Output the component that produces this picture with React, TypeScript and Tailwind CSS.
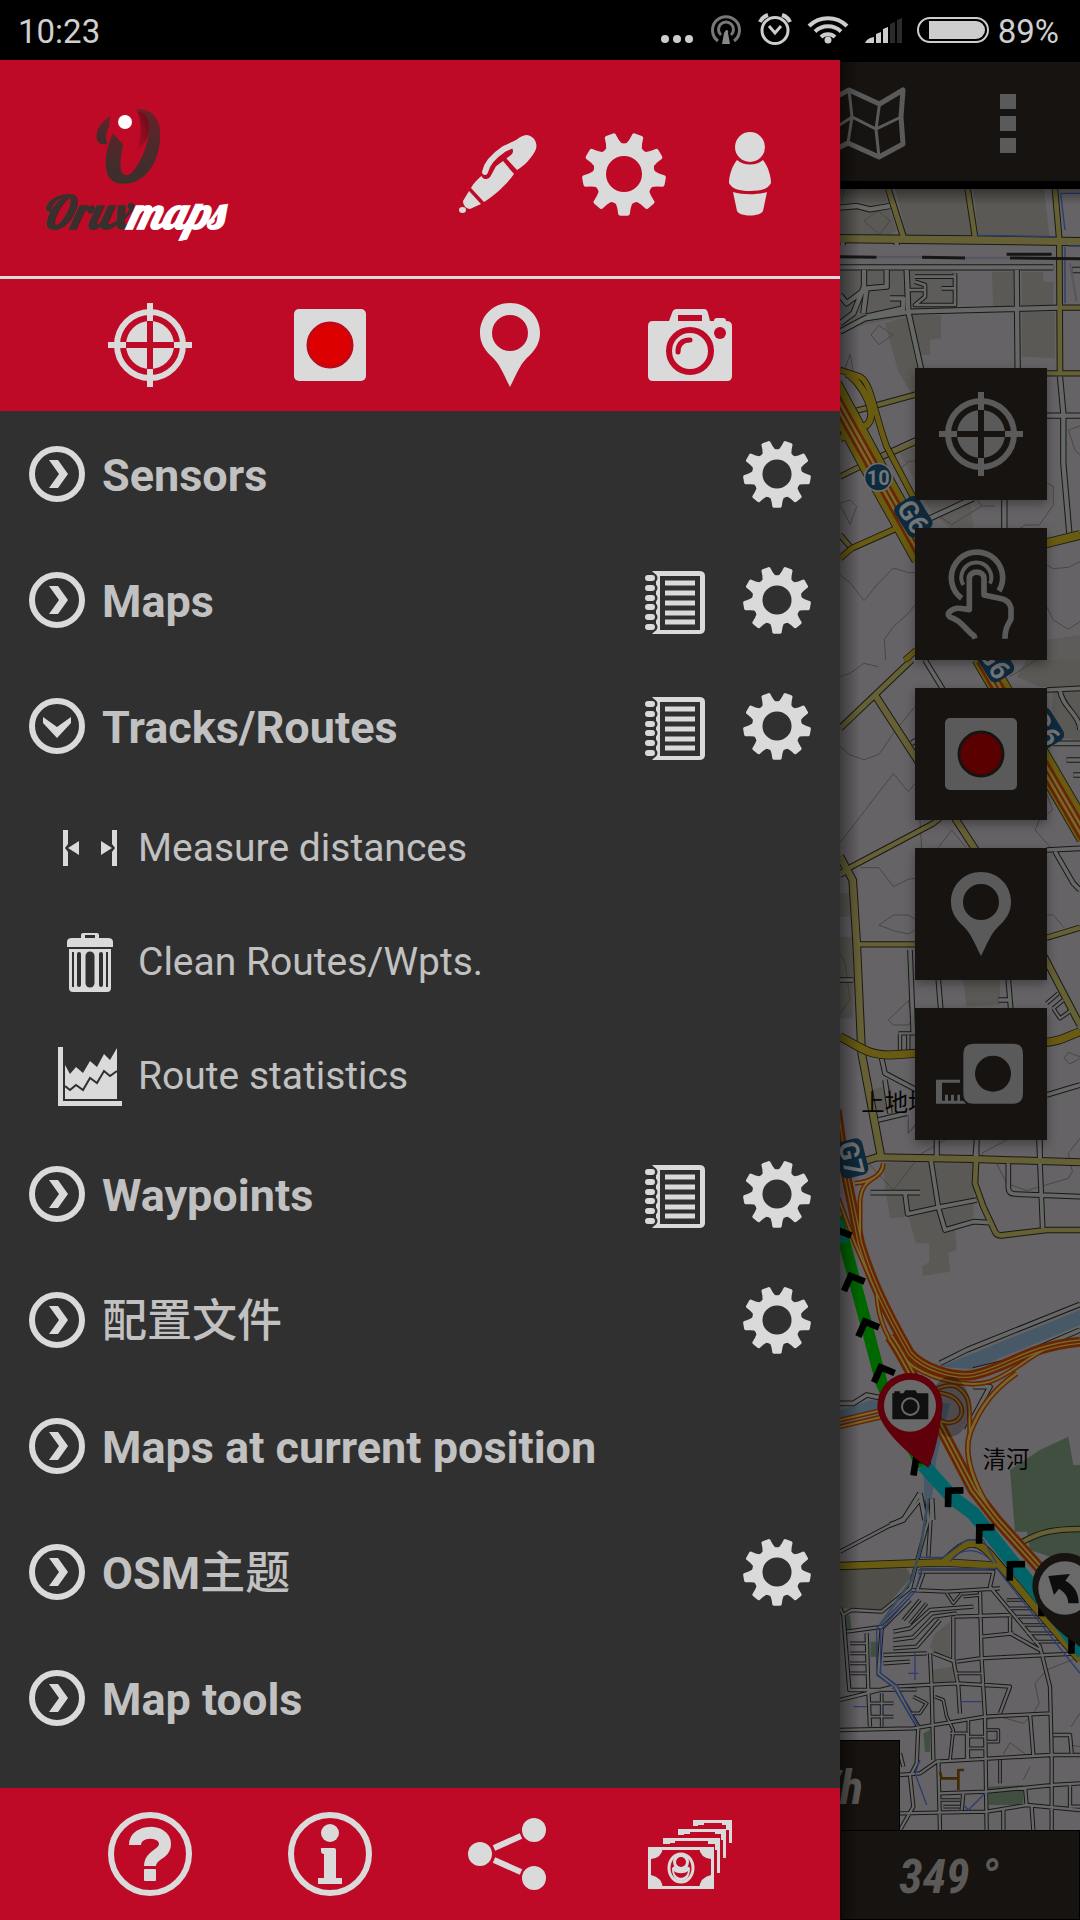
import React, { useState } from "react";

const LIGHT = "#dadada";
const RED = "#be0a26";

function gearPath(c: number, outer: number, root: number, hole: number) {
  const pt = (r: number, deg: number) => {
    const a = (deg * Math.PI) / 180;
    return `${(c + r * Math.cos(a)).toFixed(2)} ${(c + r * Math.sin(a)).toFixed(2)}`;
  };
  let d = "";
  for (let i = 0; i < 9; i++) {
    const a = 90 + i * 40;
    d += `${i === 0 ? "M" : "L"}${pt(root, a - 15)}`;
    d += `L${pt(root + 4, a - 11)}L${pt(outer - 1, a - 8)}Q${pt(outer, a - 7)} ${pt(outer, a - 5)}`;
    d += `L${pt(outer, a + 5)}Q${pt(outer, a + 7)} ${pt(outer - 1, a + 8)}`;
    d += `L${pt(root + 4, a + 11)}L${pt(root, a + 15)}Q${pt(root - 1, a + 20)} ${pt(root, a + 25)}`;
  }
  return `${d}ZM${c + hole} ${c}A${hole} ${hole} 0 1 0 ${c - hole} ${c}A${hole} ${hole} 0 1 0 ${c + hole} ${c}Z`;
}
const GEAR = gearPath(42, 42, 31, 18);

const GearIcon = ({ className }: { className: string }) => (
  <svg viewBox="0 0 84 84" className={className} fill={LIGHT} fillRule="evenodd" aria-hidden="true">
    <path d={GEAR} />
  </svg>
);

const PenIcon = () => (
  <svg viewBox="0 0 78 78" className="size-[78px]" fill={LIGHT} aria-hidden="true">
    <path d="M44 24C46 12 60 1 67 0C74 0 79 7 77 14C74 22 64 32 58 35L47 23Z" />
    <path d="M44 26L55 39C48 49 36 60 25 67L12 53C16 45 30 34 42 25Z" />
    <path d="M10 56L22 69L11 74C7 74 4 70 4 66Z" />
    <ellipse cx="3.500" cy="75" rx="3.500" ry="3" />
    <path d="M27 39L33 28L49 16" fill="none" stroke={RED} strokeWidth="10" strokeLinecap="round" />
    <path d="M26 37C28 27 36 20 45 14L58 8" fill="none" stroke={LIGHT} strokeWidth="6" strokeLinecap="round" strokeLinejoin="round" />
  </svg>
);

const PersonIcon = () => (
  <svg viewBox="0 0 42 84" className="h-[84px] w-[42px]" fill={LIGHT} aria-hidden="true">
    <path d="M8 28C15 34 27 34 34 28C39 34 42 44 42 51C39 57 32 59 21 59C10 59 3 57 0 51C0 44 3 34 8 28Z" />
    <circle cx="21" cy="15" r="15" />
    <path d="M4 60C14 63 28 63 38 60L34 79C31 85 11 85 8 79Z" />
  </svg>
);

const CrosshairIcon = ({ color, gap }: { color: string; gap: string }) => (
  <svg viewBox="0 0 84 84" className="size-[84px]" aria-hidden="true">
    <circle cx="42" cy="42" r="33" fill="none" stroke={color} strokeWidth="6" />
    <circle cx="42" cy="42" r="24" fill={color} />
    <path d="M42 12V72M12 42H72" stroke={gap} strokeWidth="6" />
    <path d="M42 0V18M42 66V84M0 42H18M66 42H84" stroke={color} strokeWidth="6" />
  </svg>
);

const RecordIcon = ({ color, rim, dot }: { color: string; rim: string; dot: string }) => (
  <svg viewBox="0 0 72 72" className="size-[72px]" aria-hidden="true">
    <rect width="72" height="72" rx="5" fill={color} />
    <circle cx="36" cy="36" r="22" fill={dot} stroke={rim} strokeWidth="3" />
  </svg>
);

const PinIcon = ({ color }: { color: string }) => (
  <svg viewBox="0 0 60 84" className="h-[84px] w-[60px]" fill={color} fillRule="evenodd" aria-hidden="true">
    <path d="M30 0C47 0 60 13 60 30C60 39 56 46 50 52C40 61 38 68 30 84C22 68 20 61 10 52C4 46 0 39 0 30C0 13 13 0 30 0ZM30 12A18 18 0 1 0 30 48A18 18 0 1 0 30 12Z" />
  </svg>
);

const CameraIcon = () => (
  <svg viewBox="0 0 84 72" className="h-[72px] w-[84px]" aria-hidden="true">
    <path fillRule="evenodd" fill={LIGHT} d="M5 12H21L24 4Q25 0 29 0H56Q59 0 60 4L62 12H66Q66 9 69 9H75Q78 9 78 12Q84 12 84 17V67Q84 72 79 72H5Q0 72 0 67V17Q0 12 5 12ZM30 6V12H54V6Z" />
    <circle cx="72" cy="24" r="6" fill={RED} />
    <circle cx="42" cy="42" r="21" fill="none" stroke={RED} strokeWidth="6" />
    <path d="M30 43C30 35 34 31 42 31" fill="none" stroke={RED} strokeWidth="5" strokeLinecap="round" />
  </svg>
);

const HelpIcon = () => (
  <svg viewBox="0 0 84 84" className="size-[84px]" fill="none" stroke={LIGHT} aria-hidden="true">
    <circle cx="42" cy="42" r="39" strokeWidth="6" />
    <path d="M27 33C27 17 57 17 57 32C57 43 42 42 42 54" strokeWidth="12" />
    <rect x="36" y="57" width="12" height="12" rx="1" fill={LIGHT} stroke="none" />
  </svg>
);

const InfoIcon = () => (
  <svg viewBox="0 0 84 84" className="size-[84px]" fill={LIGHT} aria-hidden="true">
    <circle cx="42" cy="42" r="39" fill="none" stroke={LIGHT} strokeWidth="6" />
    <circle cx="42" cy="21" r="9" />
    <path d="M33 36H46Q48 36 48 38V66H54V72H30V66H36V42Q33 42 33 39Z" />
  </svg>
);

const ShareIcon = () => (
  <svg viewBox="0 0 84 72" className="h-[72px] w-[84px]" fill={LIGHT} aria-hidden="true">
    <circle cx="12" cy="36" r="12" />
    <circle cx="66" cy="12" r="12" />
    <circle cx="66" cy="60" r="12" />
    <path d="M26 30L53 18M26 42L53 54" stroke={LIGHT} strokeWidth="6" />
  </svg>
);

const MoneyIcon = () => (
  <svg viewBox="0 0 84 69" className="h-[69px] w-[84px]" aria-hidden="true">
    <g fill="none" stroke={LIGHT} strokeWidth="3">
      <path d="M46.500 6V1.500H82.500V23" />
      <path d="M31.500 15V10.500H76.500V38" />
      <path d="M16.500 24V19.500H70.500V53" />
      <rect x="1.500" y="28.500" width="63" height="39" rx="1" />
      <ellipse cx="33" cy="48" rx="12" ry="14" />
    </g>
    <g fill={LIGHT}>
      <path d="M46 0H56V5H50V6H46ZM74 0H84V10H78V5H74ZM31 9H42V14H36V15H31ZM67 9H78V20H73V14H67ZM15 18H27V23H22V24H15ZM60 18H72V30H67V24H60Z" />
      <path d="M0 27H15Q14 38 3 39H0ZM66 27H51Q52 38 63 39H66ZM0 69H15Q14 57 3 55H0ZM66 69H51Q52 57 63 55H66Z" />
      <path d="M24 48C27 44 39 44 42 48C42 57 38 61 33 61C28 61 24 57 24 48Z" />
    </g>
    <circle cx="33" cy="42" r="6.500" fill={RED} stroke={LIGHT} strokeWidth="3" />
    <path d="M26 51C29 54 37 54 40 51C39 60 27 60 26 51Z" fill={RED} />
  </svg>
);

const NotebookIcon = () => (
  <svg viewBox="0 0 60 63" className="h-[63px] w-[60px]" aria-hidden="true">
    <path fill={LIGHT} fillRule="evenodd" d="M7 0H54Q60 0 60 5V58Q60 63 54 63H7L11 59V4ZM15 5V59H55V5Z" />
    <path stroke={LIGHT} strokeWidth="5" d="M20 12H50M20 22H50M20 32H50M20 42H50M20 51H50" />
    <path stroke="#303030" strokeWidth="9" strokeLinecap="round" d="M4 7H8M4 17H8M4 27H8M4 36H8M4 46H8M4 56H8" />
    <path stroke={LIGHT} strokeWidth="6" strokeLinecap="round" d="M3 7H7M3 17H7M3 27H7M3 36H7M3 46H7M3 56H7" />
  </svg>
);

const ArrowIcon = ({ open }: { open: boolean }) => (
  <svg viewBox="0 0 56 56" className="size-14 shrink-0" fill={LIGHT} aria-hidden="true">
    <circle cx="28" cy="28" r="25" fill="none" stroke={LIGHT} strokeWidth="6" />
    {open ? <path d="M14 19L28 29L42 19V25L28 40L14 25Z" /> : <path d="M20 14H29L39 28L29 42H20L30 28Z" />}
  </svg>
);

const MeasureIcon = () => (
  <svg viewBox="0 0 54 36" className="h-9 w-[54px]" fill={LIGHT} aria-hidden="true">
    <path d="M0 0H5V14L2 18L5 22V36H0ZM54 0H49V14L52 18L49 22V36H54ZM5 18L16 11V25ZM49 18L38 11V25Z" />
  </svg>
);

const TrashIcon = () => (
  <svg viewBox="0 0 46 59" className="h-[59px] w-[46px]" aria-hidden="true">
    <path fill={LIGHT} fillRule="evenodd" d="M0 14V9Q0 5 5 5H14V2Q14 0 16 0H30Q32 0 32 2V5H41Q46 5 46 9V14ZM18 2V5H28V2Z" />
    <path fill={LIGHT} d="M2 16H44V55Q44 59 40 59H6Q2 59 2 55Z" />
    <path stroke="#303030" strokeLinecap="round" strokeWidth="4" d="M12 21V52M34 21V52" />
    <path stroke="#303030" strokeLinecap="round" strokeWidth="9" d="M23 23V50" />
    <path stroke="#303030" strokeWidth="2" d="M6 19V54M40 19V54" />
  </svg>
);

const ChartIcon = () => (
  <svg viewBox="0 0 64 59" className="h-[59px] w-16" fill={LIGHT} aria-hidden="true">
    <path d="M0 0H5V54H64V59H0Z" />
    <path d="M7 18L12 27L18 20L25 26L32 14L39 20L46 7L52 13L59 1V52H7Z" />
    <path d="M7 39L12 43L18 38L25 43L32 31L39 36L46 24L52 29L59 24" fill="none" stroke="#303030" strokeWidth="2" />
  </svg>
);

const Logo = () => (
  <svg viewBox="102 324 600 400" className="h-[133px] w-[200px]" role="img" aria-label="Oruxmaps">
    <defs>
      <linearGradient id="ink" x1="0" y1="0" x2="0" y2="1">
        <stop offset="0" stopColor="#66222a" />
        <stop offset="0.6" stopColor="#4a2a2a" />
        <stop offset="1" stopColor="#38302c" />
      </linearGradient>
      <linearGradient id="fold" x1="1" y1="0" x2="0" y2="1">
        <stop offset="0" stopColor="#5a0d18" />
        <stop offset="1" stopColor={RED} />
      </linearGradient>
    </defs>
    <path fill="url(#fold)" d="M410 332C428 365 425 415 406 458C435 435 452 400 452 370C445 345 430 335 410 332Z" />
    <path fill="url(#ink)" d="M400 328C450 322 481 350 481 405C481 480 440 552 370 552C330 552 315 525 317 480C319 450 328 425 338 400L370 434C362 460 360 490 362 510C366 530 385 530 396 518C430 480 447 420 447 385C447 350 430 332 400 328Z" />
    <path fill="url(#ink)" d="M333 348C300 365 288 390 290 415C293 432 305 435 321 432C316 415 318 395 328 378C327 365 329 358 333 348Z" />
    <circle cx="375" cy="366" r="21" fill="#fff" />
    <text x="120" y="688" fontSize="138" fontWeight="700" fontStyle="italic" fontFamily="Lobster, 'Liberation Serif', serif" fill="#38302c">
      Orux<tspan fill="#fff">maps</tspan>
    </text>
  </svg>
);

function StatusBar() {
  return (
    <header className="flex h-[60px] shrink-0 items-center bg-black pt-0.5 pr-[21px] pl-[18px] text-[33px] leading-none text-[#cfcfcf]">
      <time className="flex-1">10:23</time>
      <svg viewBox="660 1 332 60" className="h-[60px] w-[332px]" fill="#cdcdcd" aria-hidden="true">
        <circle cx="665" cy="39" r="4" />
        <circle cx="677" cy="39" r="4" />
        <circle cx="689" cy="39" r="4" />
        <g fill="none" stroke="#777" strokeWidth="3">
          <path d="M718 41A13.500 13.500 0 1 1 734 41" />
          <path d="M721 35A7.500 7.500 0 1 1 731 35" />
        </g>
        <path d="M726 30A2 2 0 0 1 728 33L730 44H722L724 33Z" fill="#888" />
        <g fill="none" stroke="#cdcdcd" strokeWidth="3">
          <circle cx="775" cy="30.500" r="13" />
          <path d="M769 26L775 33L781 26" />
          <path d="M760 22Q762 17 768 15M790 22Q788 17 782 15" strokeWidth="4" />
        </g>
        <g fill="none" stroke="#cdcdcd" strokeWidth="4">
          <path d="M809 26A27 27 0 0 1 847 26" />
          <path d="M815 31.500A19 19 0 0 1 841 31.500" />
          <path d="M821 37A10 10 0 0 1 835 37" />
        </g>
        <circle cx="828" cy="40" r="3.500" />
        <path d="M865 43Q867 38 874 37V43ZM876 43V34L881 32V43ZM883 43V29L888 27V43Z" />
        <path d="M890 43V24L895 22V43ZM897 43V20L902 18V43Z" fill="#2b2b2b" />
        <rect x="918" y="18" width="70" height="24" rx="12" fill="none" stroke="#cdcdcd" strokeWidth="2" />
        <path d="M929 21H976A9 9 0 0 1 976 39H929Z" />
      </svg>
      <span className="ml-1.5">89%</span>
    </header>
  );
}

type RowIcon = "book" | "gear";
type Group = {
  title: string;
  cjk?: string;
  icons: RowIcon[];
  items?: { label: string; icon: React.ReactNode }[];
};
const groups: Group[] = [
  { title: "Sensors", icons: ["gear"] },
  { title: "Maps", icons: ["book", "gear"] },
  {
    title: "Tracks/Routes",
    icons: ["book", "gear"],
    items: [
      { label: "Measure distances", icon: <MeasureIcon /> },
      { label: "Clean Routes/Wpts.", icon: <TrashIcon /> },
      { label: "Route statistics", icon: <ChartIcon /> },
    ],
  },
  { title: "Waypoints", icons: ["book", "gear"] },
  { title: "", cjk: "配置文件", icons: ["gear"] },
  { title: "Maps at current position", icons: [] },
  { title: "OSM", cjk: "主题", icons: ["gear"] },
  { title: "Map tools", icons: [] },
];

function Drawer() {
  const [open, setOpen] = useState("Tracks/Routes");
  const tool = "flex items-center justify-center";
  return (
    <aside className="z-10 flex w-7/9 shrink-0 flex-col bg-[#303030] text-[#c1c1c1]">
      <div className="flex h-[216px] items-center bg-[#be0a26] pt-3 pr-[27px] pl-[34px]">
        <div className="flex-1">
          <Logo />
        </div>
        <button aria-label="Edit" className="flex w-[126px] justify-center"><PenIcon /></button>
        <button aria-label="Settings" className="flex w-[126px] justify-center"><GearIcon className="size-[84px]" /></button>
        <button aria-label="Profile" className="flex w-[126px] justify-center"><PersonIcon /></button>
      </div>
      <nav className="grid h-[135px] grid-cols-4 border-t-3 border-[#dedada] bg-[#be0a26] px-15">
        <button aria-label="GPS" className={tool}><CrosshairIcon color={LIGHT} gap={RED} /></button>
        <button aria-label="Record track" className={tool}><RecordIcon color={LIGHT} rim="#be0a18" dot="#dc0000" /></button>
        <button aria-label="New waypoint" className={tool}><PinIcon color={LIGHT} /></button>
        <button aria-label="Photo waypoint" className={tool}><CameraIcon /></button>
      </nav>
      <ul className="flex-1">
        {groups.map((g) => {
          const name = g.title + (g.cjk ?? "");
          return (
            <li key={name}>
              <div className="flex h-[126px] items-center gap-[38px] px-[29px]">
                <button
                  aria-expanded={open === name}
                  onClick={() => setOpen(open === name ? "" : name)}
                  className="flex flex-1 items-center gap-[17px] text-left text-[45px] leading-[60px] font-bold whitespace-nowrap"
                >
                  <ArrowIcon open={open === name} />
                  <span className="pt-1">
                    {g.title}
                    {g.cjk && <span className="font-medium">{g.cjk}</span>}
                  </span>
                </button>
                {g.icons.map((i) => (
                  <button key={i} aria-label={`${name} ${i === "book" ? "list" : "settings"}`} className={i === "book" ? "shrink-0 pt-1" : "shrink-0"}>
                    {i === "book" ? <NotebookIcon /> : <GearIcon className="size-[68px]" />}
                  </button>
                ))}
              </div>
              {g.items && open === name && (
                <ul>
                  {g.items.map((s) => (
                    <li key={s.label}>
                      <button className="flex h-[114px] w-full items-center gap-4 pt-1 pl-[58px] text-[39px] leading-[52px]">
                        <span className="flex w-16 justify-center">{s.icon}</span>
                        <span>{s.label}</span>
                      </button>
                    </li>
                  ))}
                </ul>
              )}
            </li>
          );
        })}
      </ul>
      <nav className="grid h-[132px] grid-cols-4 bg-[#be0a26] px-15">
        <button aria-label="Help" className={tool}><HelpIcon /></button>
        <button aria-label="About" className={tool}><InfoIcon /></button>
        <button aria-label="Share" className={tool}><ShareIcon /></button>
        <button aria-label="Donate" className={tool}><MoneyIcon /></button>
      </nav>
    </aside>
  );
}

/* Map tiles: each tile row has its own vertical offset inside the 720-unit wide sheet. */
const N = -27;
const M = 1413;
const S = 2793;
const T = 3933;

type Line = [number, string, number];

const areas: [number, string, string][] = [
  [N, "M165 27H370L395 165H200ZM400 27H612L628 168L415 165ZM0 27H130L170 150L150 165H0Z", "#5b5955"],
  [N, "M455 275H520V380H460ZM545 275H610V305H640V375H545ZM545 395H645V535L545 530ZM135 430L215 405H303V475L270 480V525H245L260 620L215 640L175 575Z", "#5b5955"],
  [N, "M0 270H340V380L0 450ZM180 820L230 800V960H390L400 1045H330L270 990ZM620 1380L720 1365V1440H620Z", "#5e5c5a"],
  [M, "M530 50L600 80H640L635 150L665 235L720 240V0H560ZM0 700H30V770H0ZM0 830H40V1075H0ZM370 960H480V1035L380 1040ZM90 1290L150 1275L165 1345L110 1360Z", "#5b5955"],
  [S, "M130 130L280 115L405 120L400 290L345 325L350 390L325 400L330 455L250 467L245 440L268 425V370H228L205 290L150 295L135 200Z", "#5b5955"],
  [S, "M300 740L400 747L720 615V570Z", "#475866"],
  [S, "M0 870L150 822V860L0 895ZM250 1040L300 850L330 850L290 1010L270 1190H255Z", "#475866"],
  [S, "M510 1050L600 990L685 950L700 1035H720V1235H525Z", "#414f41"],
  [T, "M520 0L528 85L560 92L570 150L720 200V0Z", "#414f41"],
  [T, "M0 205H200L215 230L130 330L0 325Z", "#504f49"],
  [T, "M445 860L550 855V915H447ZM92 425H115V470H92ZM250 700L270 690V755H255ZM10 350L30 345L35 395L15 390Z", "#414f41"],
  [T, "M285 400L330 365V470H290L270 440ZM275 510L340 500V550H285Z", "#5b5955"],
];

const contours: Line[] = [
  [N, "M72 123L115 92L150 123L118 163ZM93 465L117 436L158 465L117 494ZM10 580L30 522L42 590M0 970L30 960L50 980L30 1033L0 975M0 1185L30 1208L72 1262L115 1210L160 1164L205 1178H225M225 1275L205 1300L160 1340L133 1378L137 1440M180 870L205 844H225M300 1010L335 1034L425 978L400 940M425 978H465M540 1045L555 1035H598L640 975V920L620 908M720 738L685 750L705 810L720 825M620 1280L640 1320L685 1348L720 1325M620 1155L640 1166L685 1162L720 1145M12 27L5 70", 3],
  [M, "M0 50L30 40L72 10L115 20M0 260L30 285L72 299L117 283L160 220L225 140M0 548L160 341L205 395L225 370M60 623H117L160 680L205 658L225 655M117 795L160 765H205L225 778M117 795L160 812L205 822L225 810M145 1080L205 1022L216 1080L205 1095H160ZM240 480L245 565M295 563L335 510L378 563M620 400L638 450L598 480L585 510L632 563M620 765H640L672 803M510 50L590 0M205 1365V1420L225 1395M672 1195L685 1177L720 1190M672 1195L690 1212L720 1195M0 880L15 910L30 1020L0 1060", 3],
  [S, "M205 0V40L240 0M85 130L160 210L245 100L315 60M425 100L500 60M425 100L440 125M470 130L500 190L560 212L685 175L697 155L685 100L720 55", 3],
  [T, "M720 470L620 510L585 550L597 610L580 640M435 660L480 650L550 670L575 645M490 762L510 728L555 762M550 840L570 800M720 640L693 680M500 860L510 898L545 862M720 740L690 735", 3],
];

const minor: Line[] = [
  [N, "M0 83L50 78L90 88L150 78M0 262H640M0 455L75 415L210 395L660 383M200 270L205 395L245 575M530 270L533 575M72 270V320M140 270V320L80 325L20 370L0 345M72 320L40 400L0 430M150 355H190V385L80 410M660 590L670 700V850L688 1060M620 707H720M120 830L230 780M270 1015L400 955M493 960V1050M8 180V195M170 180V195M697 270H720M80 325L70 400", 13],
  [N, "M225 290H345V375H225L255 350V315L225 305M345 280V375M205 330H255M305 325H345", 8],
  [M, "M255 0L310 90M620 90L720 85M660 90C665 140 720 165 720 210M640 250H720M680 300H720M700 345H720M620 570L720 565M645 575L700 670L720 690M210 870L220 1120M295 960L302 1045M505 960L512 1045M475 1020H510M125 1195L135 1240L230 1290M115 1380L200 1360M135 1260L150 1360M620 1305L720 1275M290 1440V1500M410 1440L405 1500M600 1440V1500M0 960H40M215 250L230 240M0 645L20 635", 11],
  [M, "M175 1120H225M180 1120V1175M205 1125V1175M620 1030L655 1000M640 1045L670 1020M640 1045L660 1075L695 1050", 7],
  [S, "M92 218H240M195 220L203 282L295 262L410 240M272 115L295 262L315 330L400 305L450 308M505 130V205Q507 222 525 222L720 230M597 60L608 325M290 60V110M410 60V110M300 730L380 690L720 553M400 750L500 725L720 630M0 850L40 850L80 825L130 835M380 930L450 800L400 800M240 1120L190 1200L150 1215M240 1120L255 1200M275 1135L278 1200", 11],
  [T, "M240 0L200 50L0 155M260 0L265 60L240 150L210 265L125 335L35 330L10 345L28 570L230 568M275 0L265 170M10 345L0 325M20 395L130 380L210 300M125 385L115 520L165 560L235 680L230 790L215 820M0 600L160 560L350 550L430 555M0 690L220 685L435 650L630 640M80 400L85 570L90 680M180 825L240 820L290 785L630 765H720M215 270L320 275L480 265M235 215H460L450 260L600 440L630 560L635 760L635 990M250 220L230 275M340 350V480L355 560L360 640M345 350L510 345M420 275L425 480L435 650L440 990M350 485L420 475L720 460M280 460L345 485M160 395L210 385L270 330L400 320M160 420L220 412L280 350L350 340M160 445L230 440L300 360M130 465L260 460M130 490L210 485M425 410L520 400M510 350V400L600 450M295 780L300 990M300 880L440 875L640 855L720 850M180 940L440 935L560 915L720 930M570 640L580 765M435 555L510 560L480 640M490 930V990M575 920L580 990M640 705H690L695 760M210 825L220 920L180 990M180 760L190 800M370 880L365 930M555 860L560 915M690 855V920H720M270 460L275 560L280 780", 7],
  [T, "M500 300H560M510 325H580M530 350H600M550 375H620M560 400H640M580 425H660M370 290L420 285M350 520H425M285 590L310 600L320 650L340 690L330 780M330 700H380V780M385 660V780M385 710H435M385 745H435M30 430H80M30 460H80M30 490H80M30 520H80M90 610H160M90 650H160M125 580V680M240 300L190 360M260 310L210 370M320 280L340 310L365 280M440 690H475V725H440M480 780V850M300 900H360M310 920H360M220 590L260 610L240 640H210", 5],
];

const pale: Line[] = [
  [N, "M145 27L190 170", 15],
  [N, "M383 27L405 170", 14],
  [N, "M645 27L658 180L660 580", 14],
  [N, "M0 176L400 180L720 185", 22],
  [N, "M655 383H720M610 580H720M40 695L95 680L240 640M0 890L70 855L240 780M0 1065L35 1105", 13],
  [M, "M0 205L105 105L215 0", 15],
  [M, "M105 105L225 290L420 590", 18],
  [M, "M0 640L25 625L280 490L300 475M50 853H230M620 833L720 803", 13],
  [M, "M0 590L38 660L50 850L65 1180L125 1500", 20],
  [M, "M610 885L720 1095", 17],
  [S, "M70 125L110 112L400 117L720 127", 18],
  [S, "M408 125L405 190L430 260L465 335Q470 347 485 346L620 330H720", 14],
  [T, "M540 130C600 95 640 88 720 87", 13],
];

const major: Line[] = [
  [N, "M0 570L60 590C95 610 100 690 140 800L240 990", 15],
  [N, "M20 580C60 600 120 700 80 735L0 775", 19],
  [N, "M0 1135L35 1105L170 1045M195 1440L230 1410", 15],
  [N, "M610 1092L720 1065", 24],
  [N, "M-30 620L110 880L250 1130", 72],
  [M, "M0 1130C60 1160 80 1185 150 1185L230 1180M610 1148C660 1145 680 1130 720 1115", 22],
  [M, "M425 -10L740 530", 60],
  [T, "M0 198L310 187C350 150 370 130 400 130C440 135 460 180 500 220L600 340L720 480M310 187L470 197", 20],
];

const motorway: Line[] = [
  [N, "M-30 630L110 880L250 1130", 38],
  [M, "M425 0L740 540", 38],
  [S, "M-10 -30L15 150L60 370C90 470 130 560 210 700C250 745 340 775 400 765C500 745 560 680 720 665", 30],
  [S, "M130 130C125 190 62 160 60 250V370M-5 235L45 370L110 520C115 600 140 670 220 740C300 790 400 800 450 785C520 760 560 710 640 675M45 190C90 185 125 170 130 130", 15],
  [S, "M530 760C460 810 420 860 390 940C370 1000 390 1080 470 1200", 17],
  [S, "M150 650C200 720 230 800 290 900L400 1110L470 1200L640 1390", 34],
  [S, "M0 920L150 885C250 850 290 780 350 800C400 830 385 870 390 940M0 900L150 865M230 830C300 800 370 830 365 880C350 925 300 910 260 880", 15],
];

const chevrons: [number, number, number, number][] = [
  [S, -8, 330, 0], [S, 32, 468, 0], [S, 75, 605, 0], [S, 122, 742, 0], [S, 228, 1018, -15],
  [S, 325, 1112, -23], [T, 418, 82, -23], [T, 510, 193, -23], [T, 605, 300, -23], [T, 695, 412, -23],
];

const lines = (list: Line[], stroke: string, extra: number) =>
  list.map(([y, d, w], i) => (
    <path key={i} d={d} transform={`translate(0 ${y})`} stroke={stroke} strokeWidth={w + extra} />
  ));

function Shield({ x, y, r, children }: { x: number; y: number; r: number; children: string }) {
  return (
    <g transform={`translate(${x} ${y}) rotate(${r})`}>
      <rect x="-56" y="-42" width="112" height="84" rx="20" fill="#0e2a3e" />
      <text y="30" fontSize="82" fontWeight="700" textAnchor="middle" fill="#737577" fontFamily="Roboto, sans-serif">{children}</text>
    </g>
  );
}

function MapSheet() {
  return (
    <svg viewBox="0 0 720 4923" preserveAspectRatio="xMinYMin slice" className="absolute inset-0 size-full" fill="none" strokeLinejoin="round" aria-hidden="true">
      <rect width="720" height="4923" fill="#666366" />
      {areas.map(([y, d, f], i) => (
        <path key={i} d={d} fill={f} transform={`translate(0 ${y})`} />
      ))}
      {lines(contours, "#4a4741", 0)}
      {lines(minor, "#181818", 6)}
      {lines(pale, "#1b1a12", 6)}
      {lines(minor, "#666866", 0)}
      {lines(pale, "#666037", 0)}
      {lines(major, "#1b1a12", 5)}
      {lines(major, "#695b12", 0)}
      <g stroke="#2a3c70" strokeWidth="4">
        <path transform={`translate(0 ${N})`} d="M410 166L645 170M662 40H720M662 40L675 150M675 200V370M685 198H720" />
        <path transform={`translate(0 ${T})`} d="M230 172H310L380 120H430L470 190M330 185C360 140 420 140 460 190M240 205H470L720 520M215 275L110 385V525L160 560L225 675M245 210L225 275L122 390V520L170 555L235 680M240 780L225 820L260 915M360 605H425M40 620H80M130 620V640M370 915L385 930L435 880M205 520H235M225 460V540" />
      </g>
      <path transform={`translate(0 ${T})`} d="M265 0L240 150L215 240L120 375" stroke="#3b4d5c" strokeWidth="8" />
      <path transform={`translate(0 ${T})`} d="M300 815L305 835H355M372 810H355V870" stroke="#402b05" strokeWidth="8" />
      <path transform={`translate(0 ${N})`} d="M0 230L110 232M246 232L375 234M510 234L720 236M500 223H635" stroke="#161616" strokeWidth="9" />
      <path transform={`translate(0 ${N})`} d="M110 231H246M375 234H510M690 250L710 365" stroke="#555860" strokeWidth="7" />
      <g>
        <path transform={`translate(0 ${S})`} d="M-10 290L15 375L70 580L125 790L245 1040" stroke="#006600" strokeWidth="36" />
        <path transform={`translate(0 ${S})`} d="M-10 300L8 370" stroke="#006468" strokeWidth="30" />
        <path transform={`translate(0 ${S})`} d="M250 1035L340 1135L400 1180L600 1430L730 1600" stroke="#006468" strokeWidth="42" />
      </g>
      {lines(motorway, "#682500", 0)}
      {motorway.map(([y, d, w], i) => (
        <path key={i} d={d} transform={`translate(0 ${y})`} stroke="#75672f" strokeWidth={w > 25 ? w - 16 : w - 9} />
      ))}
      {motorway.filter((m) => m[2] > 25).map(([y, d], i) => (
        <path key={i} d={d} transform={`translate(0 ${y})`} stroke="#682500" strokeWidth="6" />
      ))}
      {chevrons.map(([o, x, y, r], i) => (
        <path key={i} d="M-20 45L0 0L42 17" transform={`translate(${x} ${y + o}) rotate(${r})`} stroke="#000" strokeWidth="20" strokeLinejoin="miter" />
      ))}
      <g transform={`translate(115 ${N + 892})`}>
        <circle r="44" fill="#6b6c6c" />
        <circle r="39" fill="#0e2a3e" />
        <text y="22" fontSize="60" fontWeight="700" textAnchor="middle" fill="#737577" fontFamily="Roboto, sans-serif">10</text>
      </g>
      <Shield x={220} y={N + 1010} r={58}>G6</Shield>
      <Shield x={465} y={M + 5} r={58}>G6</Shield>
      <Shield x={615} y={M + 205} r={58}>G6</Shield>
      <Shield x={35} y={S + 115} r={76}>G7</Shield>
      <g fill="#050505" fontSize="70" fontFamily="'Noto Sans CJK SC', sans-serif">
        <text x="64" y={M + 1352}>上地均</text>
        <text x="428" y={S + 1043}>清河</text>
      </g>
      <g transform={`translate(0 ${S})`}>
        <ellipse cx="330" cy="860" rx="60" ry="90" fill="#000" opacity="0.25" />
        <path d="M265 1043C200 1000 112 920 112 857A98 98 0 0 1 308 857C300 930 285 1000 265 1043Z" fill="#5f000a" />
        <circle cx="210" cy="857" r="78" fill="#696969" />
        <path d="M157 820H163V814H180V820H190L196 811H226L232 820H265V898H157Z" fill="#101010" />
        <circle cx="211" cy="860" r="25" stroke="#696969" strokeWidth="6" />
      </g>
      <g transform={`translate(0 ${T})`}>
        <path d="M578 270A98 98 0 0 1 720 170V440C660 400 590 340 578 270Z" fill="#171310" />
        <circle cx="675" cy="264" r="80" fill="#696969" />
        <path d="M625 228L690 222L676 242C705 258 716 280 716 310H685C684 290 675 277 657 266L642 285Z" fill="#0d0d0d" />
      </g>
    </svg>
  );
}

const TouchIcon = () => (
  <svg viewBox="225 1045 396 396" className="size-[132px]" fill="none" stroke="#5a5a5a" strokeWidth="17" aria-hidden="true">
    <path d="M365 1256A77 77 0 1 1 477 1234" />
    <path d="M370 1216A45 45 0 1 1 450 1212" strokeWidth="12" />
    <path d="M405 1377L402 1368C380 1355 365 1322 335 1314C325 1311 322 1303 328 1297C345 1280 362 1286 388 1290V1197C388 1171 432 1171 432 1197V1246L485 1257Q508 1262 513 1285V1318C500 1342 495 1350 495 1377" strokeLinejoin="round" />
  </svg>
);

const MeasureRecordIcon = () => (
  <svg viewBox="225 1045 396 396" className="size-[132px]" fill="#5a5a5a" fillRule="evenodd" aria-hidden="true">
    <path d="M400 1152H519Q549 1152 549 1182V1302Q549 1332 519 1332H400Q370 1332 370 1302V1182Q370 1152 400 1152ZM459 1188A54 54 0 1 0 459 1296A54 54 0 1 0 459 1188Z" />
    <path d="M288 1260H360V1269H306V1323H315V1305H324V1323H333V1305H342V1323H352V1305H360V1323H370L378 1332H288Z" />
  </svg>
);

function MapPane() {
  const btn = "flex size-[132px] items-center justify-center bg-[#171310] shadow-[0_4px_10px_rgba(0,0,0,0.35)]";
  return (
    <main className="relative flex min-w-0 flex-1 flex-col overflow-hidden bg-black font-['Roboto_Condensed',Roboto,sans-serif]">
      <div className="flex h-[129px] items-center justify-between border-t-2 border-b-8 border-black bg-[#171310] pt-1 pr-16">
        <svg viewBox="0 0 66 74" className="h-[74px] w-[66px]" fill="none" stroke="#5a5a5a" aria-hidden="true">
          <path d="M-8 12L9 3L39.500 17L63 3L61 30L63 57L39 70L8 56L-8 64" strokeWidth="5" strokeLinejoin="round" />
          <path d="M9 3L12 30L8 56M39.500 17L36 42L39 70M-2 39L12 30L36 42L61 30" strokeWidth="3" />
        </svg>
        <button aria-label="More options" className="flex flex-col gap-[7px]">
          <span className="h-[15px] w-4 bg-[#5a5a5a]" />
          <span className="h-[15px] w-4 bg-[#5a5a5a]" />
          <span className="h-[15px] w-4 bg-[#5a5a5a]" />
        </button>
      </div>
      <div className="relative flex flex-1 flex-col overflow-hidden">
        <MapSheet />
        <div className="absolute inset-x-0 top-0 h-4 bg-gradient-to-b from-black/40 to-transparent" />
        <div className="relative flex flex-col items-end gap-7 pt-[179px] pr-[33px]">
          <button aria-label="Center on GPS" className={btn}><CrosshairIcon color="#5a5a5a" gap="#171310" /></button>
          <button aria-label="Touch mode" className={btn}><TouchIcon /></button>
          <button aria-label="Record" className={btn}><RecordIcon color="#5a5a5a" rim="#171310" dot="#5a0000" /></button>
          <button aria-label="Add waypoint" className={btn}><PinIcon color="#5a5a5a" /></button>
          <button aria-label="Measure and record" className={btn}><MeasureRecordIcon /></button>
        </div>
        <div className="relative mt-auto flex h-[90px] w-[60px] items-center justify-end overflow-hidden border-t border-r border-black bg-[#171310] pt-1 pr-9 text-[48px] leading-none font-bold text-[#5c5a58] italic">
          /h
        </div>
      </div>
      <div className="flex h-[90px] items-center border border-black bg-[#171310] pt-1 pl-[58px] text-[48px] leading-none font-bold whitespace-pre text-[#5c5a58] italic">
        349 °
      </div>
      <div className="pointer-events-none absolute inset-y-0 left-0 w-5 bg-gradient-to-r from-black/40 to-transparent" />
    </main>
  );
}

export default function App() {
  return (
    <div className="flex min-h-screen flex-col bg-black font-[Roboto,'Noto_Sans_CJK_SC',sans-serif]">
      <StatusBar />
      <div className="flex flex-1">
        <Drawer />
        <MapPane />
      </div>
    </div>
  );
}
